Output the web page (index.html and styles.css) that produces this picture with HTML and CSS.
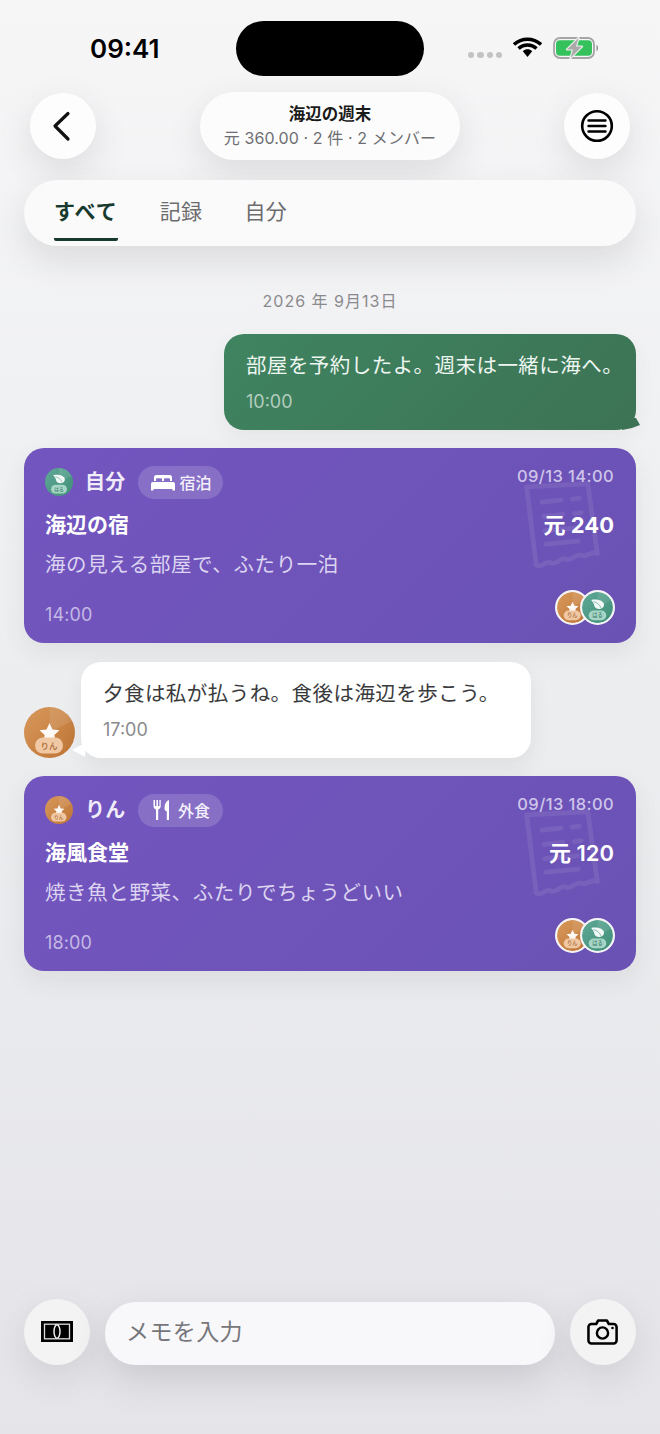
FILE: index.html
```html
<!DOCTYPE html>
<html lang="ja">
<head>
<meta charset="utf-8">
<title>海辺の週末</title>
<link rel="stylesheet" href="styles.css">
</head>
<body>
<svg class="defs" width="0" height="0" aria-hidden="true">
  <defs>
    <linearGradient id="gOrange" x1="0" y1="0" x2="1" y2="1"><stop offset="0" stop-color="#d8995c"/><stop offset="1" stop-color="#bd7434"/></linearGradient>
    <linearGradient id="gGreen" x1="0" y1="0" x2="1" y2="1"><stop offset="0" stop-color="#5fa896"/><stop offset="1" stop-color="#3f8f78"/></linearGradient>
    <symbol id="av-rin" viewBox="0 0 51 51">
      <circle cx="25.5" cy="25.5" r="25.5" fill="url(#gOrange)"/>
      <path d="M25.5 0A25.5 25.5 0 0 1 48 14L25.5 25.5Z" fill="#fff" fill-opacity=".1"/>
      <path d="M25.5 16l3 6.600 7 .7-5.200 4.700 1.500 6.800-6.300-3.500-6.300 3.500 1.500-6.800-5.200-4.700 7-.7Z" fill="#fff" fill-opacity=".95"/>
      <rect x="11" y="30.500" width="28" height="16" rx="8" fill="#f0c8a4"/>
      <text x="25" y="41.500" text-anchor="middle" class="av-label av-label-rin">りん</text>
    </symbol>
    <symbol id="av-haru" viewBox="0 0 51 51">
      <circle cx="25.5" cy="25.5" r="25.5" fill="url(#gGreen)"/>
      <path d="M25.500 0A25.500 25.500 0 0 1 48 14L25.500 25.500Z" fill="#fff" fill-opacity=".1"/>
      <path d="M15 13c10-2 19 1 21 6 1 5-2 8-7 9-6 0-9-3-9-7-1-3-3-6-5-8Z" fill="#f2f8f5"/>
      <path d="M19 16c5 1 10 4 12 10" fill="none" stroke="#5fa896" stroke-width="1.200"/>
      <rect x="11" y="30.500" width="29" height="16" rx="8" fill="#a6d5c6"/>
      <text x="25.500" y="41.500" text-anchor="middle" class="av-label av-label-haru">はる</text>
    </symbol>
    <symbol id="receipt" viewBox="0 0 90 92">
      <path d="M8 6 L72 3 L82 76 C76 72 72 80 66 78 C60 74 56 84 50 82 C44 78 40 88 34 86 C28 82 24 92 18 88 Z" fill="none" stroke="#fff" stroke-width="5" stroke-linejoin="round"/>
      <path d="M24 22l20-2M56 19l7-1M26 37l20-2M58 34l7-1M27 52l34-3M28 66l34-3" fill="none" stroke="#fff" stroke-width="5" stroke-linecap="round"/>
    </symbol>
  </defs>
</svg>

<div class="page">
  <header class="status">
    <span class="clock">09:41</span>
    <span class="island"></span>
    <div class="status-icons">
      <span class="signal"><i></i><i></i><i></i><i></i></span>
      <svg class="wifi" width="29" height="21" viewBox="0 0 29 21"><path d="M1 7.500C8.500.5 20.500.5 28 7.500M5.500 11.500c5-4.600 13-4.600 18 0" fill="none" stroke="#000" stroke-width="3.400"/><path d="M9.800 14.200c2.800-2.500 6.600-2.500 9.400 0L14.500 20Z" fill="#000"/></svg>
      <svg class="battery" width="47" height="22" viewBox="0 0 47 22">
        <rect x="1" y="1" width="40" height="20" rx="6" fill="none" stroke="#a5a5a5" stroke-width="1.800"/>
        <rect x="3" y="3.300" width="36" height="15.400" rx="4" fill="#35c25d"/>
        <path d="M43.500 8c2 .4 2 5.600 0 6Z" fill="#8f8f8f"/>
        <path d="M25.500 1 14 12.500h6L17.500 21 29 9.500h-6Z" fill="#a9aaa9" stroke="#eef0ee" stroke-width="2.200" stroke-linejoin="round" paint-order="stroke"/>
      </svg>
    </div>
  </header>

  <nav class="topbar">
    <button class="round-btn" type="button" aria-label="戻る">
      <svg class="back-icon" width="20" height="32" viewBox="0 0 20 32"><path d="M17 3.500 4 16 17 29" fill="none" stroke="#111" stroke-width="3.200" stroke-linecap="round" stroke-linejoin="round"/></svg>
    </button>
    <div class="title-pill">
      <div class="title">海辺の週末</div>
      <div class="subtitle">元 360.00 · 2 件 · 2 メンバー</div>
    </div>
    <button class="round-btn" type="button" aria-label="メニュー">
      <svg width="34" height="34" viewBox="0 0 34 34"><circle cx="17" cy="17" r="14.800" fill="none" stroke="#000" stroke-width="2.600"/><path d="M8.500 11.500h17M8.500 17h17M8.500 22.500h17" stroke="#000" stroke-width="2.400" stroke-linecap="round"/></svg>
    </button>
  </nav>

  <div class="tabs">
    <span class="tab tab-active">すべて</span>
    <span class="tab">記録</span>
    <span class="tab">自分</span>
  </div>

  <main class="feed">
    <div class="date">2026 年 9月13日</div>

    <div class="bubble bubble-out">
      <p class="bubble-text">部屋を予約したよ。週末は一緒に海へ。</p>
      <span class="bubble-time">10:00</span>
    </div>

    <article class="card">
      <svg class="card-watermark"><use href="#receipt"/></svg>
      <div class="card-row card-head">
        <div class="who">
          <svg class="av-sm"><use href="#av-haru"/></svg>
          <span class="who-name">自分</span>
          <span class="chip">
            <svg width="26" height="17" viewBox="0 0 26 17"><path d="M4 7V3.500C4 1.800 5 1 6.500 1h13C21 1 22 1.800 22 3.500V7h-2V5.500c0-.8-.5-1.200-1.200-1.200h-3.600c-.7 0-1.200.4-1.200 1.200V7h-2V5.500c0-.8-.5-1.200-1.200-1.200H7.200C6.500 4.300 6 4.700 6 5.500V7Z" fill="#fff"/><path d="M1 13.500V10c0-1.200.8-2 2-2h20c1.200 0 2 .8 2 2v3.500ZM1 13.500v3h2.500v-1.500h19v1.500H25v-3Z" fill="#fff"/></svg>
            宿泊
          </span>
        </div>
        <span class="card-stamp">09/13 14:00</span>
      </div>
      <div class="card-row card-main">
        <span class="card-title">海辺の宿</span>
        <span class="card-amount amount-wide">元 240</span>
      </div>
      <p class="card-desc">海の見える部屋で、ふたり一泊</p>
      <div class="card-row card-foot">
        <span class="card-time">14:00</span>
        <div class="pair">
          <svg class="av-pair"><use href="#av-rin"/></svg>
          <svg class="av-pair av-pair-top"><use href="#av-haru"/></svg>
        </div>
      </div>
    </article>

    <div class="incoming">
      <svg class="av-lg"><use href="#av-rin"/></svg>
      <div class="bubble bubble-in">
        <p class="bubble-text">夕食は私が払うね。食後は海辺を歩こう。</p>
        <span class="bubble-time">17:00</span>
      </div>
    </div>

    <article class="card">
      <svg class="card-watermark"><use href="#receipt"/></svg>
      <div class="card-row card-head">
        <div class="who">
          <svg class="av-sm"><use href="#av-rin"/></svg>
          <span class="who-name">りん</span>
          <span class="chip">
            <svg class="fork-icon" width="18" height="22" viewBox="0 0 18 22"><path d="M1.500 1v6c0 2 1 3 2.500 3.500V21h2.200V10.500C7.700 10 8.700 9 8.700 7V1H7.400v6H6V1H4.400v6H3V1Z" fill="#fff"/><path d="M17 1c-3 1-4.500 4-4.500 8 0 2 .8 3 2.300 3.500V21H17Z" fill="#fff"/></svg>
            外食
          </span>
        </div>
        <span class="card-stamp">09/13 18:00</span>
      </div>
      <div class="card-row card-main">
        <span class="card-title">海風食堂</span>
        <span class="card-amount">元 120</span>
      </div>
      <p class="card-desc">焼き魚と野菜、ふたりでちょうどいい</p>
      <div class="card-row card-foot">
        <span class="card-time">18:00</span>
        <div class="pair">
          <svg class="av-pair"><use href="#av-rin"/></svg>
          <svg class="av-pair av-pair-top"><use href="#av-haru"/></svg>
        </div>
      </div>
    </article>
  </main>

  <footer class="composer">
    <button class="round-btn round-btn-grey" type="button" aria-label="金額">
      <svg width="34" height="22" viewBox="0 0 34 22"><rect x="1" y="0" width="32" height="21" fill="#000"/><rect x="4.500" y="3.200" width="25" height="14.600" fill="none" stroke="#ddd" stroke-width="1.300"/><ellipse cx="17" cy="10.500" rx="3" ry="6.800" fill="#000" stroke="#eee" stroke-width="1.500"/></svg>
    </button>
    <div class="memo">メモを入力</div>
    <button class="round-btn round-btn-grey" type="button" aria-label="カメラ">
      <svg width="32" height="26" viewBox="0 0 32 26"><path d="M4.500 5h5l2-3.500h9l2 3.500h5c1.600 0 3 1.300 3 3v13.500c0 1.700-1.400 3-3 3h-23c-1.600 0-3-1.300-3-3V8c0-1.700 1.400-3 3-3Z" transform="scale(.97 1)" fill="none" stroke="#000" stroke-width="2.600" stroke-linejoin="round"/><circle cx="15.500" cy="14" r="5.600" fill="none" stroke="#000" stroke-width="2.400"/><circle cx="25.500" cy="9" r="1.300" fill="#000"/></svg>
    </button>
  </footer>
</div>
</body>
</html>
```

FILE: styles.css
```css
* { box-sizing: border-box; }
html, body { margin: 0; padding: 0; }
body {
  width: 660px;
  height: 1434px;
  overflow: hidden;
  font-family: Inter, "Noto Sans CJK JP", sans-serif;
  color: #333;
}
.defs { position: absolute; }
.page {
  width: 660px;
  height: 1434px;
  display: flex;
  flex-direction: column;
  background: linear-gradient(180deg, #f6f6f7 0%, #edeef0 45%, #e5e5e9 100%);
}

/* status bar */
.status {
  height: 92px;
  display: flex;
  align-items: flex-start;
  padding: 21px 0 0 90px;
}
.clock {
  width: 146px;
  margin-top: 11px;
  font-size: 26px;
  line-height: 34px;
  font-weight: 600;
  color: #000;
}
.island {
  width: 188px;
  height: 55px;
  border-radius: 28px;
  background: #000;
}
.status-icons {
  display: flex;
  align-items: center;
  margin: 18px 0 0 44px;
}
.signal { display: flex; gap: 3px; margin: 12px 11px 0 0; }
.signal i { width: 6.250px; height: 6px; border-radius: 50%; background: #c3c3c5; }
.wifi { margin-right: 11px; margin-top: -3px; }
.battery { margin-top: -2px; }

/* top bar */
.topbar {
  display: flex;
  align-items: center;
  justify-content: space-between;
  padding: 0 30px;
  height: 68px;
}
.round-btn {
  width: 66px;
  height: 66px;
  padding: 0;
  border: 0;
  border-radius: 50%;
  background: #fdfdfd;
  display: flex;
  align-items: center;
  justify-content: center;
  box-shadow: 0 12px 34px rgba(60, 60, 70, .13);
}
.round-btn-grey { background: #f3f3f4; }
.back-icon { margin-right: 4px; }
.title-pill {
  width: 260px;
  height: 68px;
  border-radius: 34px;
  background: #fcfcfd;
  text-align: center;
  padding-top: 11px;
  box-shadow: 0 12px 34px rgba(60, 60, 70, .13);
}
.title { font-size: 16.500px; line-height: 23px; font-weight: 700; color: #1a1a1a; }
.subtitle { font-size: 16px; line-height: 24px; color: #6e6e72; white-space: nowrap; letter-spacing: .1px; }

/* tabs */
.tabs {
  margin: 20px 24px 0;
  height: 66px;
  border-radius: 33px;
  background: #fafafb;
  display: flex;
  padding-left: 30px;
  gap: 42px;
  box-shadow: 0 14px 34px rgba(60, 60, 70, .13);
}
.tab {
  height: 61px;
  font-size: 21px;
  line-height: 63px;
  color: #6c6c6e;
  letter-spacing: .35px;
}
.tab-active {
  font-weight: 700;
  color: #18392e;
  letter-spacing: 1px;
  border-bottom: 3px solid #18392e;
  border-radius: 0 0 2px 2px;
}

/* feed */
.feed {
  flex: 1;
  display: flex;
  flex-direction: column;
  padding: 0 24px;
  align-items: stretch;
}
.date {
  margin-top: 44px;
  text-align: center;
  font-size: 16px;
  line-height: 23px;
  letter-spacing: 1px;
  color: #8a8a8e;
}
.bubble {
  position: relative;
  padding: 13px 22px 0;
  height: 96px;
  border-radius: 20px;
}
.bubble-text {
  margin: 0;
  font-size: 20.500px;
  line-height: 38px;
  letter-spacing: .45px;
  white-space: nowrap;
}
.bubble-time { display: block; font-size: 18px; line-height: 34px; }
.bubble-out {
  align-self: flex-end;
  margin-top: 21px;
  width: 412px;
  background: linear-gradient(135deg, #3f8460, #3c7355);
  color: #eef6f1;
  box-shadow: 0 8px 20px rgba(60, 60, 70, .06);
}
.bubble-out .bubble-time { color: #b3cdbf; }
.bubble-out::after {
  content: "";
  position: absolute;
  right: -4px;
  bottom: 0;
  width: 18px;
  height: 12px;
  background: #3c7355;
  clip-path: polygon(14px 0, 18px 7px, 10px 10px, 0 12px, 0 0);
}
.bubble-in {
  width: 450px;
  background: #fff;
  color: #3a3a3c;
  box-shadow: 0 8px 20px rgba(60, 60, 70, .08);
}
.bubble-in .bubble-time { color: #8a8a8e; }
.bubble-in::before {
  content: "";
  position: absolute;
  left: -9px;
  bottom: 0;
  width: 14px;
  height: 13px;
  background: #fff;
  clip-path: polygon(9px 0, 0 5px, 13px 12px, 14px 0);
}
.incoming {
  display: flex;
  align-items: flex-end;
  gap: 6px;
  margin-top: 19px;
}
.av-lg { width: 51px; height: 51px; flex: none; }

/* cards */
.card {
  position: relative;
  height: 195px;
  margin-top: 18px;
  padding: 16px 22px 0 21px;
  border-radius: 20px;
  background: linear-gradient(135deg, #7355bf, #6a52b4);
  color: #fff;
  box-shadow: 0 10px 24px rgba(60, 60, 70, .08);
  overflow: hidden;
}
.card-watermark {
  position: absolute;
  left: 495px;
  top: 33px;
  width: 86px;
  height: 88px;
  opacity: .08;
  filter: blur(.6px);
}
.card-row {
  position: relative;
  display: flex;
  justify-content: space-between;
}
.card-head { align-items: flex-start; height: 36px; }
.who { display: flex; align-items: center; height: 36px; }
.av-sm { width: 28px; height: 28px; flex: none; margin-right: 12px; }
.who-name { font-size: 20px; line-height: 38px; font-weight: 600; color: #f0ecfa; margin-right: 13px; letter-spacing: .2px; }
.chip {
  width: 85px;
  height: 33px;
  border-radius: 17px;
  background: rgba(255, 255, 255, .16);
  display: flex;
  align-items: center;
  justify-content: center;
  gap: 3px;
  font-size: 16px;
  font-weight: 500;
  color: #f3f0fb;
  white-space: nowrap;
}
.fork-icon { margin-right: 5px; }
.card-stamp { font-size: 16.500px; line-height: 24px; color: #cfc5ea; font-weight: 500; letter-spacing: .4px; }
.card-main { margin-top: 10px; align-items: center; height: 30px; }
.card-title { font-size: 21px; font-weight: 700; line-height: 30px; }
.card-amount { font-size: 22px; font-weight: 600; line-height: 30px; }
.amount-wide { font-weight: 700; }
.card-desc {
  position: relative;
  margin: 10px 0 0;
  font-size: 20.500px;
  line-height: 30px;
  letter-spacing: .6px;
  color: #dcd4f1;
  white-space: nowrap;
}
.card-foot { margin-top: 9px; align-items: center; height: 36px; }
.card-time { font-size: 18px; letter-spacing: .1px; color: #c5b9e5; line-height: 36px; margin-top: 16px; }
.pair { display: flex; margin-right: -1px; }
.av-pair {
  width: 35px;
  height: 35px;
  border: 2px solid #f4f4f6;
  border-radius: 50%;
  background: #f4f4f6;
}
.av-pair-top { margin-left: -10px; }
.av-label { font-family: Inter, "Noto Sans CJK JP", sans-serif; font-size: 8.500px; font-weight: 500; }
.av-label-rin { fill: #a86a33; }
.av-label-haru { fill: #3b7f6d; }

/* composer */
.composer {
  height: 135px;
  display: flex;
  align-items: flex-start;
  padding: 0 24px;
  gap: 15px;
}
.memo {
  flex: 1;
  height: 63px;
  margin-top: 3px;
  border-radius: 31px;
  background: #f8f8fa;
  padding-left: 21px;
  font-size: 23px;
  line-height: 61px;
  color: #76767a;
  letter-spacing: .4px;
  box-shadow: 0 14px 36px rgba(60, 60, 70, .17);
}
```
